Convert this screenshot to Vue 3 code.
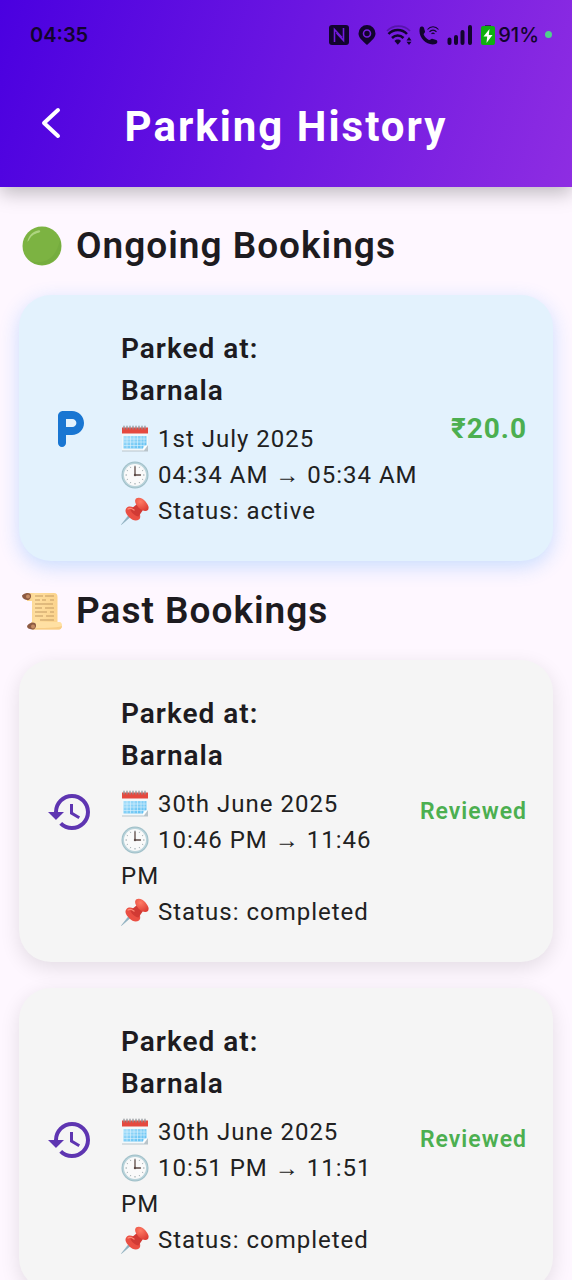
<script setup>
const ongoing = [
  { id: 1, place: 'Barnala', date: '1st July 2025', from: '04:34 AM', to: '05:34 AM', status: 'active', price: '₹20.0' }
]
const past = [
  { id: 2, place: 'Barnala', date: '30th June 2025', from: '10:46 PM', to: '11:46 PM', status: 'completed' },
  { id: 3, place: 'Barnala', date: '30th June 2025', from: '10:51 PM', to: '11:51 PM', status: 'completed' }
]
const sections = [
  { id: 'ongoing', title: 'Ongoing Bookings', emoji: '#circle', icon: '#parking', items: ongoing },
  { id: 'past', title: 'Past Bookings', emoji: '#scroll', icon: '#history', items: past }
]
</script>

<template>
  <div class="screen">
    <svg class="defs" aria-hidden="true">
      <defs>
        <radialGradient id="pinRed" cx="40%" cy="30%" r="75%">
          <stop offset="0" stop-color="#ff7a64" />
          <stop offset="1" stop-color="#dd3d34" />
        </radialGradient>
        <linearGradient id="calBlue" x1="0" y1="0" x2="1" y2="1">
          <stop offset="0" stop-color="#a9e0fb" />
          <stop offset="1" stop-color="#58bdf2" />
        </linearGradient>
        <linearGradient id="scrollPaper" x1="0" y1="0" x2="1" y2="0">
          <stop offset="0" stop-color="#f6cf88" />
          <stop offset="0.3" stop-color="#ffdf9f" />
          <stop offset="1" stop-color="#fbd38c" />
        </linearGradient>
      </defs>
      <symbol id="circle" viewBox="0 0 40 40">
        <circle cx="20" cy="20" r="19.5" fill="#7cb342" />
        <path d="M38 13a19.500 19.500 0 0 1-31 21c12 6 28 0 31-21z" fill="#689f38" opacity=".3" />
        <path d="M5.500 15C7 9 11 5 17 4.200c2 .2 1.500 2-.5 2.500C11.500 8 9 10 7 14c-.8 1.500-2 2-1.500 1z" fill="#aed581" />
      </symbol>
      <symbol id="scroll" viewBox="0 0 40 40">
        <path d="M4 2h28c2.500 0 3.500 1.500 3.500 4v27H10V10H5z" fill="url(#scrollPaper)" />
        <path d="M9 31h29c3 1 2.500 7-1 7.500H10z" fill="#ffe0a3" />
        <path d="M10 38.500h27c2 0 3-2 3-3.500-6 2-20 2-30 2z" fill="#f8cd86" />
        <path d="M0 4.500C2 2 6 1 8.500 3 10 6 8 9.500 5 9 2 8.500 0 7 0 4.500z" fill="#8d5a42" />
        <circle cx="6" cy="5.500" r="2" fill="#c58b62" />
        <path d="M5 35c2-3 6-4.500 8.500-2.500 1.500 3-.5 6.500-3.500 6S5 37.500 5 35z" fill="#8d5a42" />
        <circle cx="11" cy="35.500" r="2" fill="#c58b62" />
        <path d="M13 5h8m2 0h9M13 9h5m2 0h4m4 0h4M13 13h18M13 17h7m3 0h9M13 21h12m3 0h4M13 25h8m3 0h8M18 29h14" stroke="#c39a62" stroke-width="1" fill="none" />
      </symbol>
      <symbol id="calendar" viewBox="0 0 28 28">
        <path d="M1 3h26v23.500H1z" fill="#b9c4ca" />
        <path d="M1 3h26v17l-4 5.500H1z" fill="#f3f8fa" />
        <path d="M1 2.500h26v6H1z" fill="#e5493f" />
        <path d="M2.500 11h23v9.500l-3.500 3H2.500z" fill="url(#calBlue)" />
        <path d="M2.500 14h23M2.500 17h23M2.500 20.500h23M6 11v12.500M9.500 11v12.500M13 11v12.500M16.500 11v12.500M20 11v12.500M23 11v11" stroke="#dff4fd" stroke-width=".6" />
        <path d="M22 25.500l.5-4 4-1.500z" fill="#fff" />
        <path d="M3 1v3M6 1v3M9 1v3M12 1v3M15 1v3M18 1v3M21 1v3M24 1v3" stroke="#8a8f94" stroke-width="1.200" stroke-linecap="round" />
      </symbol>
      <symbol id="clock" viewBox="0 0 28 28">
        <circle cx="14" cy="14" r="13.500" fill="#9fbfc8" />
        <circle cx="14" cy="14" r="12.500" fill="#b9d3da" />
        <circle cx="14" cy="14" r="11" fill="#fafafa" />
        <path d="M14 4.500v1.500M14 22v1.500M4.500 14H6M22 14h1.500M9.200 5.800l.6 1M18.800 5.800l-.6 1M5.800 9.200l1 .6M22.200 9.200l-1 .6M5.800 18.800l1-.6M22.200 18.800l-1-.6M9.200 22.200l.6-1M18.800 22.200l-.6-1" stroke="#8b989d" stroke-width=".9" />
        <path d="M14 6v8h5.500" fill="none" stroke="#5d4a46" stroke-width="1.300" stroke-linecap="round" />
        <circle cx="14" cy="14" r="1.200" fill="#5d4a46" />
      </symbol>
      <symbol id="pin" viewBox="0 0 28 28">
        <path d="M.5 27.500L9.500 16l2 2z" fill="#8eb0c0" stroke="#8eb0c0" stroke-width=".6" />
        <path d="M5.500 11c2.500-2.500 6.500-1.500 10 1.500s5 7.500 2.500 10c-3 2-6.500 1-9.500-2s-5.500-6.500-3-9.500z" fill="#ea4f43" />
        <path d="M9.500 12.500L16 7l6 6-4.500 6.500c-2 .5-8-4-8-7z" fill="#d13a34" />
        <path d="M15 1.500c3-2 7 0 9.500 3s4 6 2.500 8.500c-2.500 2-6.500.5-9.500-2.500s-4.500-6.500-2.500-9z" fill="url(#pinRed)" />
        <path d="M7 12c1.500-1 4-.5 6 1" fill="none" stroke="#ff8a75" stroke-width="1.300" stroke-linecap="round" />
      </symbol>
      <symbol id="parking" viewBox="0 0 24 24">
        <path d="M13 3H8.500C7.100 3 6 4.100 6 5.500V19c0 1.100.9 2 2 2s2-.9 2-2v-4h3c3.310 0 6-2.690 6-6s-2.690-6-6-6zm.2 8H10V7h3.200c1.100 0 2 .9 2 2s-.9 2-2 2z" fill="#1976d2" />
      </symbol>
      <symbol id="history" viewBox="0 0 24 24">
        <path d="M13 3a9 9 0 0 0-9 9H1l3.890 3.890.07.14L9 12H6c0-3.870 3.130-7 7-7s7 3.130 7 7-3.130 7-7 7c-1.930 0-3.680-.79-4.940-2.060l-1.420 1.420A8.954 8.954 0 0 0 13 21a9 9 0 0 0 0-18zm-1 5v5l4.250 2.520.77-1.280-3.520-2.090V8H12z" fill="#5e35b1" />
      </symbol>
    </svg>

    <header class="top">
      <div class="status">
        <span class="time">04:35</span>
        <span class="indicators">
          <svg class="nfc" viewBox="0 0 20 20" aria-label="NFC">
            <rect x="0" y="0" width="20" height="20" rx="3" fill="#12042e" />
            <path d="M5.500 17V4.500L13 12.500M14.500 3v12.500L7.500 8" fill="none" stroke="#721ade" stroke-width="1.600" />
          </svg>
          <svg class="place" viewBox="0 0 18 20" aria-label="Location">
            <path d="M9 0a8.500 8.500 0 0 0-8.500 8.500C.5 13 4.500 15.500 9 20c4.500-4.500 8.500-7 8.500-11.500A8.500 8.500 0 0 0 9 0z" fill="#12042e" />
            <circle cx="9" cy="8.500" r="3.500" fill="none" stroke="#761ddf" stroke-width="1.600" />
          </svg>
          <svg class="wifi" viewBox="0 0 26 20" aria-label="Wi-Fi">
            <path d="M1 6C7-.5 18-.5 24 6" fill="none" stroke="#12042e" stroke-opacity=".3" stroke-width="1.800" />
            <path d="M2.500 9c5-5.300 13.500-5.300 18.500 0M6 13c3.300-3.300 8.200-3.300 11.500 0" fill="none" stroke="#12042e" stroke-width="2.500" />
            <path d="M8.500 16c1.800-1.900 4.700-1.900 6.500 0l-3.200 3.800z" fill="#12042e" />
            <path d="M20.500 15.500L23 12l2.500 3.500zM20.500 16.800h5L23 20z" fill="#12042e" />
          </svg>
          <svg class="call" viewBox="0 0 20 20" aria-label="Wi-Fi calling">
            <path d="M1 2.500C2 1 4.500 1.500 5 3l1 3.500c.3 1-1.500 2-1.300 3 1 2.500 3 4.500 5.300 5.500 1 .4 2-1.500 3.200-1.200l4 1.200c1.500.6 1.500 3 0 3.800C8 22-2 12 1 2.500z" fill="#12042e" />
            <path d="M8.500 4.500c3-3.700 8-3.700 11 0M10.500 6.800c2-2.300 5-2.300 7 0M12.500 8.800c1-1 2-1 3 0" fill="none" stroke="#12042e" stroke-width="1.100" />
          </svg>
          <svg class="signal" viewBox="0 0 26 20" aria-label="Signal">
            <path d="M2.500 18v-3.500M9 18v-6M15.500 18V7M23 18V2" stroke="#12042e" stroke-width="4" stroke-linecap="round" />
          </svg>
          <svg class="battery" viewBox="0 0 14 20" aria-label="Charging">
            <path d="M4 0h6v2H4z" fill="#3c1a67" />
            <rect x="0" y="1" width="14" height="19" rx="2" fill="#10b010" />
            <path d="M8.500 4L2.500 11.500h3.700L5.500 18l6-8H7.800z" fill="#fff" />
          </svg>
          <span class="percent">91%</span>
          <i class="dot"></i>
        </span>
      </div>
      <div class="bar">
        <button class="back" type="button" aria-label="Back">
          <svg viewBox="0 0 20 32"><path d="M17 3L3 16l14 13" fill="none" stroke="#fff" stroke-width="4" stroke-linecap="round" stroke-linejoin="round" /></svg>
        </button>
        <h1>Parking History</h1>
      </div>
    </header>

    <main>
      <section v-for="s in sections" :key="s.id" :class="s.id">
        <h2><svg class="emoji-lg" aria-hidden="true"><use :href="s.emoji" /></svg>{{ s.title }}</h2>
        <article v-for="b in s.items" :key="b.id" class="card">
          <svg class="lead" aria-hidden="true"><use :href="s.icon" /></svg>
          <div class="info">
            <h3>Parked at:<br />{{ b.place }}</h3>
            <p><svg class="emoji" aria-hidden="true"><use href="#calendar" /></svg>{{ b.date }}</p>
            <p><svg class="emoji" aria-hidden="true"><use href="#clock" /></svg>{{ `${b.from} → ${b.to}` }}</p>
            <p><svg class="emoji" aria-hidden="true"><use href="#pin" /></svg>Status: {{ b.status }}</p>
          </div>
          <strong v-if="b.price" class="price">{{ b.price }}</strong>
          <strong v-else class="reviewed">Reviewed</strong>
        </article>
      </section>
    </main>
  </div>
</template>

<style>
body {
  margin: 0;
  background: #fef7ff;
}
</style>

<style scoped>
.screen {
  height: 100vh;
  overflow: hidden;
  background: #fef7ff;
  color: #1d1b20;
  font-family: Roboto, "Liberation Serif", sans-serif;
  letter-spacing: 1px;
}
.defs {
  position: absolute;
  width: 0;
  height: 0;
}
.top {
  position: relative;
  padding-bottom: 16px;
  background: linear-gradient(108deg, #4a00e0, #8e2de2);
  box-shadow: 0 6px 18px rgba(0, 0, 0, 0.26);
}
.status {
  display: flex;
  align-items: center;
  justify-content: space-between;
  height: 69px;
  padding: 0 20px 0 30px;
  color: #12042e;
  font-family: Inter, Roboto, sans-serif;
  font-size: 20px;
  font-weight: 600;
  letter-spacing: normal;
}
.indicators {
  display: flex;
  align-items: center;
}
.indicators svg {
  height: 20px;
}
.nfc { width: 20px; margin-right: 9px; }
.place { width: 18px; margin-right: 10px; }
.wifi { width: 26px; margin-right: 7px; }
.call { width: 20px; margin-right: 8px; }
.signal { width: 26px; margin-right: 8px; }
.battery { width: 14px; margin-right: 3px; }
.percent {
  font-weight: 500;
}
.dot {
  width: 7px;
  height: 7px;
  margin-left: 6px;
  border-radius: 50%;
  background: #4fd18b;
}
.bar {
  display: grid;
  grid-template-columns: 104px 1fr 104px;
  align-items: center;
  height: 102px;
}
.back {
  justify-self: start;
  height: 48px;
  margin-top: 6px;
  margin-left: 32px;
  padding: 0 9px;
  border: 0;
  background: none;
}
.back svg {
  display: block;
  width: 20px;
  height: 32px;
}
h1 {
  margin: 14px 0 0;
  color: #fff;
  font-size: 42px;
  font-weight: 700;
  line-height: 56px;
  letter-spacing: 2px;
  text-align: center;
  white-space: nowrap;
}
main {
  padding: 35px 19px 0;
}
h2 {
  display: flex;
  align-items: center;
  gap: 14px;
  margin: 0 0 25px;
  padding-left: 3px;
  font-size: 37px;
  font-weight: 600;
  line-height: 48px;
}
.emoji-lg {
  width: 40px;
  height: 40px;
}
.card {
  display: flex;
  align-items: center;
  margin-bottom: 26px;
  padding: 33px 26px 32px 27px;
  border-radius: 32px;
}
.ongoing .card {
  background: #e3f2fd;
  box-shadow: 0 6px 20px rgba(33, 140, 250, 0.24);
}
.past .card {
  background: #f5f5f5;
  box-shadow: 0 6px 20px rgba(0, 0, 0, 0.11);
}
.lead {
  flex: none;
  width: 48px;
  height: 48px;
  margin-right: 27px;
}
.info {
  flex: 1;
  min-width: 0;
}
h3 {
  margin: 0 0 9px;
  font-size: 28px;
  font-weight: 600;
  line-height: 42px;
}
p {
  margin: 0;
  color: #212121;
  font-size: 24px;
  line-height: 36px;
}
.emoji {
  width: 28px;
  height: 28px;
  margin-right: 9px;
  vertical-align: -6px;
}
.price,
.reviewed {
  margin-left: 16px;
  color: #4caf50;
}
.price { font-size: 28px; font-weight: 700; }
.reviewed { font-size: 23px; font-weight: 600; }
</style>
